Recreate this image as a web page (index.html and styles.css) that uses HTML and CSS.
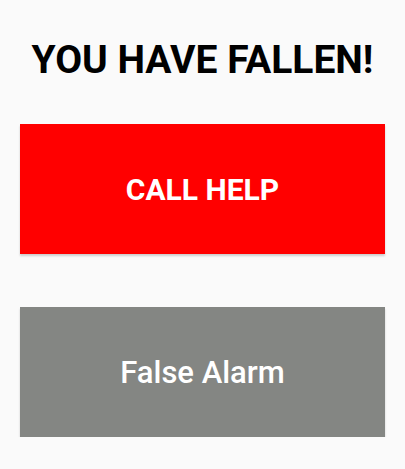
FILE: index.html
```html
<!DOCTYPE html>
<html>
<head>
<meta charset="utf-8">
<link rel="stylesheet" href="styles.css">
</head>
<body>
<main class="screen">
  <h1 class="title">YOU HAVE FALLEN!</h1>
  <button class="btn btn-help">CALL HELP</button>
  <button class="btn btn-false">False Alarm</button>
</main>
</body>
</html>
```
FILE: styles.css
```css
html, body {
  margin: 0;
  padding: 0;
  background: #fafafa;
}
.screen {
  display: flex;
  flex-direction: column;
  padding: 0 20px;
  font-family: Roboto, "Noto Sans", sans-serif;
}
.title {
  margin: 36px 0 0;
  height: 88px;
  font-size: 39px;
  font-weight: 700;
  line-height: 48px;
  text-align: center;
  color: #000;
}
.btn {
  height: 130px;
  border: none;
  border-radius: 0;
  font-family: Roboto, "Noto Sans", sans-serif;
  color: #fff;
  box-shadow: 0 2px 2px rgba(0,0,0,0.18);
  padding: 0;
}
.btn-help {
  background: #ff0000;
  font-size: 30px;
  font-weight: 700;
}
.btn-false {
  margin-top: 53px;
  background: #848683;
  font-size: 31px;
  font-weight: 500;
}
```
